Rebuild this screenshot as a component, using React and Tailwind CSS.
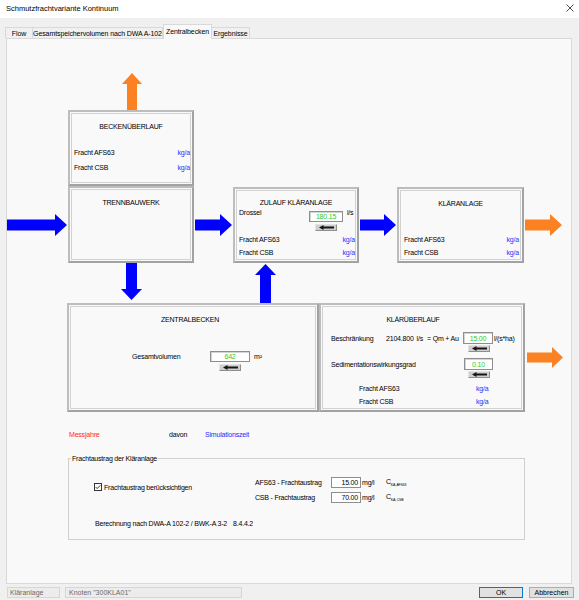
import React from "react";

function ArrowH({ w, h = 22, s = 11, hl = 12, color, className = "" }) {
  const y1 = (h - s) / 2;
  const y2 = (h + s) / 2;
  const pts = `0,${y1} ${w - hl},${y1} ${w - hl},0 ${w},${h / 2} ${w - hl},${h} ${w - hl},${y2} 0,${y2}`;
  return (
    <svg width={w} height={h} viewBox={`0 0 ${w} ${h}`} className={`block shrink-0 ${className}`}>
      <polygon points={pts} fill={color} />
    </svg>
  );
}

function ArrowV({ w = 21, h, s = 11, hl = 11, color, dir = "down", className = "" }) {
  const x1 = (w - s) / 2;
  const x2 = (w + s) / 2;
  const pts =
    dir === "down"
      ? `${x1},0 ${x2},0 ${x2},${h - hl} ${w},${h - hl} ${w / 2},${h} 0,${h - hl} ${x1},${h - hl}`
      : `${w / 2},0 ${w},${hl} ${x2},${hl} ${x2},${h} ${x1},${h} ${x1},${hl} 0,${hl}`;
  return (
    <svg width={w} height={h} viewBox={`0 0 ${w} ${h}`} className={`block shrink-0 ${className}`}>
      <polygon points={pts} fill={color} />
    </svg>
  );
}

function ArrowBtn({ className = "" }) {
  return (
    <div className={`w-[22px] h-[7px] bg-[#cfcfcf] border border-t-[#e4e4e4] border-l-[#e4e4e4] border-r-[#8f8f8f] border-b-[#8f8f8f] flex items-center justify-center ${className}`}>
      <svg width="15" height="5" viewBox="0 0 15 5" className="block">
        <polygon points="0,2.5 4.5,0 4.5,1.6 15,1.6 15,3.4 4.5,3.4 4.5,5" fill="#161616" />
      </svg>
    </div>
  );
}

function Box({ className = "", children }) {
  return (
    <div className={`shrink-0 border-2 border-t-[#bdbdbd] border-l-[#bdbdbd] border-r-[#a2a2a2] border-b-[#a2a2a2] p-px bg-[#f9f9f9] ${className}`}>
      <div className="h-full border border-[#d2d2d2]">{children}</div>
    </div>
  );
}

const ORANGE = "#fb8122";
const BLUE = "#0000ff";

export default function App() {
  return (
    <div className="w-[579px] h-[600px] overflow-hidden whitespace-nowrap bg-[#f0f0f0] text-black font-['Liberation_Sans',Arial,sans-serif] text-[7px] leading-[9px]">
      {/* Title bar */}
      <div className="h-[18px] bg-white flex items-center justify-between pl-[6px] pr-[4px]">
        <span className="text-[7.5px] leading-[10px]">Schmutzfrachtvariante Kontinuum</span>
        <svg width="8" height="8" viewBox="0 0 8 8" className="block mr-[1px] -mt-[2px]">
          <line x1="0.5" y1="0.5" x2="7.5" y2="7.5" stroke="#222" strokeWidth="0.8" />
          <line x1="7.5" y1="0.5" x2="0.5" y2="7.5" stroke="#222" strokeWidth="0.8" />
        </svg>
      </div>

      {/* Tabs */}
      <div className="mt-[6px] h-[14px] flex items-end pl-[5px] tracking-[-0.1px]">
        <div className="w-[27px] h-[11px] border border-b-0 border-r-0 border-[#d9d9d9] bg-[#f0f0f0] flex items-center justify-center">Flow</div>
        <div className="w-[131px] h-[11px] border border-b-0 border-[#d9d9d9] bg-[#f0f0f0] flex items-center justify-center">Gesamtspeichervolumen nach DWA A-102</div>
        <div className="relative z-10 w-[49px] h-[15px] -mb-px border border-b-0 border-[#d9d9d9] bg-[#f9f9f9] flex items-center justify-center pb-[1px]">Zentralbecken</div>
        <div className="w-[38px] h-[11px] border border-b-0 border-l-0 border-[#d9d9d9] bg-[#f0f0f0] flex items-center justify-center">Ergebnisse</div>
      </div>

      {/* Panel */}
      <div className="ml-[6px] w-[566px] h-[546px] border border-[#d9d9d9] bg-[#f9f9f9] tracking-[-0.2px]">
        {/* Row A: orange up arrow */}
        <ArrowV w={20} h={37} s={10} hl={11} dir="up" color={ORANGE} className="mt-[34px] ml-[115px]" />

        {/* Row B: Beckenüberlauf */}
        <Box className="ml-[61px] w-[126px] h-[76px]">
          <div className="pt-[8px] text-center">BECKENÜBERLAUF</div>
          <div className="mt-[17px] flex justify-between pl-[2px]">
            <span>Fracht AFS63</span>
            <span className="text-[#2f2fff]">kg/a</span>
          </div>
          <div className="mt-[6px] flex justify-between pl-[2px]">
            <span>Fracht CSB</span>
            <span className="text-[#2f2fff]">kg/a</span>
          </div>
        </Box>

        {/* Row C */}
        <div className="flex items-start h-[77px]">
          <ArrowH w={60} color={BLUE} className="mt-[28px]" />
          <Box className="ml-[1px] w-[126px] h-[77px]">
            <div className="pt-[7.5px] text-center">TRENNBAUWERK</div>
          </Box>
          <ArrowH w={37} color={BLUE} className="mt-[28px] ml-[1px]" />
          <Box className="ml-[1px] mt-[1px] w-[126px] h-[76px]">
            <div className="pt-[7px] text-center">ZULAUF KLÄRANLAGE</div>
            <div className="mt-[1px] flex items-start pl-[2px]">
              <span className="w-[70px] shrink-0">Drossel</span>
              <div className="mt-[3px] w-[34px] h-[11px] bg-white border border-[#8e8e8e] shadow-[inset_1px_1px_0_#d4d4d4] flex items-center justify-center text-[#2ccb2c]">180.15</div>
              <span className="ml-[4px]">l/s</span>
            </div>
            <ArrowBtn className="mt-[2px] ml-[78px]" />
            <div className="mt-[4px] flex justify-between pl-[2px]">
              <span>Fracht AFS63</span>
              <span className="text-[#2f2fff]">kg/a</span>
            </div>
            <div className="mt-[4px] flex justify-between pl-[2px]">
              <span>Fracht CSB</span>
              <span className="text-[#2f2fff]">kg/a</span>
            </div>
          </Box>
          <ArrowH w={36} color={BLUE} className="mt-[28px] ml-[1px]" />
          <Box className="ml-[1px] mt-[1px] w-[127px] h-[76px]">
            <div className="pt-[7.5px] text-center">KLÄRANLAGE</div>
            <div className="mt-[27px] flex justify-between pl-[3px] pr-[1px]">
              <span>Fracht AFS63</span>
              <span className="text-[#2f2fff]">kg/a</span>
            </div>
            <div className="mt-[4px] flex justify-between pl-[3px] pr-[1px]">
              <span>Fracht CSB</span>
              <span className="text-[#2f2fff]">kg/a</span>
            </div>
          </Box>
          <ArrowH w={37} color={ORANGE} className="mt-[28px] ml-[1px]" />
        </div>

        {/* Row D: vertical arrows */}
        <div className="flex items-start h-[40px]">
          <ArrowV w={21} h={37} dir="down" color={BLUE} className="ml-[114px]" />
          <ArrowV w={21} h={39} dir="up" color={BLUE} className="ml-[113px] mt-[1px]" />
        </div>

        {/* Row E */}
        <div className="flex items-center h-[109px]">
          <Box className="ml-[60px] w-[252px] h-[109px]">
            <div className="pt-[7.5px] pr-[6px] text-center">ZENTRALBECKEN</div>
            <div className="mt-[27.5px] flex items-center h-[11px]">
              <span className="ml-[61px] w-[78px] shrink-0">Gesamtvolumen</span>
              <div className="w-[40px] h-[11px] bg-white border border-[#8e8e8e] shadow-[inset_1px_1px_0_#d4d4d4] flex items-center justify-center text-[#2ccb2c]">642</div>
              <span className="ml-[4px]">m²</span>
            </div>
            <ArrowBtn className="mt-[2px] ml-[148px]" />
          </Box>
          <Box className="w-[206px] h-[109px]">
            <div className="pt-[7.5px] pr-[18px] text-center">KLÄRÜBERLAUF</div>
            <div className="mt-[8.5px] flex items-center h-[12px]">
              <span className="ml-[8px] w-[55px] shrink-0">Beschränkung</span>
              <div className="w-[77px] shrink-0 flex">
                <span>2104.800</span>
                <span className="ml-[3px]">l/s</span>
                <span className="ml-[4px]">= Qm + Au</span>
              </div>
              <div className="w-[30px] h-[12px] bg-white border border-[#8e8e8e] shadow-[inset_1px_1px_0_#d4d4d4] flex items-center justify-center text-[#2ccb2c]">15.00</div>
              <span className="ml-[1px]">l/(s*ha)</span>
            </div>
            <ArrowBtn className="mt-[1px] ml-[145px]" />
            <div className="mt-[6px] flex items-center h-[12px]">
              <span className="ml-[8px] w-[133px] shrink-0">Sedimentationswirkungsgrad</span>
              <div className="w-[29px] h-[12px] bg-white border border-[#8e8e8e] shadow-[inset_1px_1px_0_#d4d4d4] flex items-center justify-center text-[#2ccb2c]">0.10</div>
            </div>
            <ArrowBtn className="mt-[1px] ml-[145px]" />
            <div className="mt-[5.5px] flex">
              <span className="ml-[36px] w-[117px] shrink-0">Fracht AFS63</span>
              <span className="text-[#2f2fff]">kg/a</span>
            </div>
            <div className="mt-[4px] flex">
              <span className="ml-[36px] w-[117px] shrink-0">Fracht CSB</span>
              <span className="text-[#2f2fff]">kg/a</span>
            </div>
          </Box>
          <ArrowH w={36} h={21} s={10} hl={11} color={ORANGE} className="ml-[2px]" />
        </div>

        {/* Messjahre row */}
        <div className="mt-[18px] flex">
          <span className="ml-[62px] w-[100px] shrink-0 text-[#ff2a2a]">Messjahre</span>
          <span className="w-[36px] shrink-0">davon</span>
          <span className="text-[#2a2aff]">Simulationszeit</span>
        </div>

        {/* Group box */}
        <div className="mt-[19px] ml-[61px] w-[457px] h-[82px] border border-[#d0d0d0]">
          <div className="-mt-[5px] ml-[2px] px-[1px] w-fit bg-[#f9f9f9]">Frachtaustrag der Kläranlage</div>
          <div className="mt-[14px] flex">
            <div className="w-[186px] shrink-0">
              <div className="mt-[5.5px] ml-[25px] flex items-center h-[9px]">
                <svg width="8" height="8" viewBox="0 0 8 8" className="block shrink-0">
                  <rect x="0.5" y="0.5" width="7" height="7" fill="#fff" stroke="#333" strokeWidth="1" />
                  <polyline points="1.6,4 3.2,5.6 6.4,2.2" fill="none" stroke="#222" strokeWidth="0.9" />
                </svg>
                <span className="ml-[2px]">Frachtaustrag berücksichtigen</span>
              </div>
            </div>
            <div className="flex flex-col gap-[4px]">
              <div className="flex items-center h-[11px]">
                <span className="w-[76px] shrink-0">AFS63 - Frachtaustrag</span>
                <div className="w-[30px] h-[11px] bg-white border border-[#8e8e8e] flex items-center justify-end pr-[2px]">15.00</div>
                <span className="ml-[1px] w-[24px] shrink-0">mg/l</span>
                <span>C<span className="text-[3.5px] leading-[4px] align-sub">KA, AFS63</span></span>
              </div>
              <div className="flex items-center h-[11px]">
                <span className="w-[76px] shrink-0">CSB - Frachtaustrag</span>
                <div className="w-[30px] h-[11px] bg-white border border-[#8e8e8e] flex items-center justify-end pr-[2px]">70.00</div>
                <span className="ml-[1px] w-[24px] shrink-0">mg/l</span>
                <span>C<span className="text-[3.5px] leading-[4px] align-sub">KA, CSB</span></span>
              </div>
            </div>
          </div>
          <div className="mt-[15.5px] ml-[26px] flex">
            <span>Berechnung nach DWA-A 102-2 / BWK-A 3-2</span>
            <span className="ml-[6px]">8.4.4.2</span>
          </div>
        </div>
      </div>

      {/* Bottom bar */}
      <div className="mt-[3px] h-[11px] flex items-stretch">
        <div className="ml-[7px] w-[53px] bg-[#ececec] border border-[#d6d6d6] pl-[2px] flex items-center text-[#6b6b6b]">Kläranlage</div>
        <div className="ml-[5px] w-[177px] bg-[#ececec] border border-[#d6d6d6] pl-[3px] flex items-center text-[#6b6b6b]">Knoten "300KLA01"</div>
        <div className="ml-[237px] w-[44px] bg-[#e1e1e1] border border-[#0078d7] flex items-center justify-center">OK</div>
        <div className="ml-[6px] w-[45px] bg-[#e1e1e1] border border-[#adadad] flex items-center justify-center">Abbrechen</div>
      </div>
    </div>
  );
}
